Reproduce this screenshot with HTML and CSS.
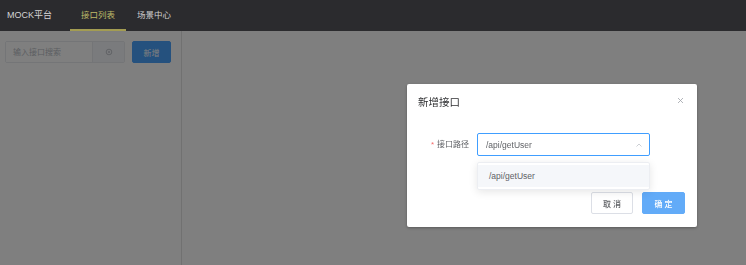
FILE: index.html
```html
<!DOCTYPE html>
<html lang="zh-CN">
<head>
    <meta charset="UTF-8">
    <meta name="viewport" content="width=device-width, initial-scale=1.0">
    <title>MOCK平台</title>
    <link rel="stylesheet" href="styles.css">
</head>
<body>

    <header class="topbar">
        <div class="brand">MOCK平台</div>
        <nav class="nav">
            <a class="nav-item active">接口列表</a>
            <a class="nav-item">场景中心</a>
        </nav>
    </header>

    <div class="layout">
        <aside class="sidebar">
            <div class="search-row">
                <div class="input-group">
                    <input class="search-input" type="text" placeholder="输入接口搜索">
                    <span class="append">
                        <svg width="8" height="8" viewBox="0 0 8 8">
                            <circle cx="4" cy="4" r="2.8" fill="none" stroke="#b4b8bf" stroke-width="0.8"/>
                            <circle cx="4" cy="4" r="1" fill="#c0c4cc"/>
                        </svg>
                    </span>
                </div>
                <button class="btn btn-primary">新增</button>
            </div>
        </aside>
        <main class="content"></main>
    </div>

    <div class="mask"></div>

    <div class="dialog">
        <div class="dialog-header">
            <span class="dialog-title">新增接口</span>
            <button class="dialog-close">
                <svg width="7" height="7" viewBox="0 0 7 7">
                    <path d="M1 1 L6 6 M6 1 L1 6" stroke="#a0a3a9" stroke-width="0.8"/>
                </svg>
            </button>
        </div>
        <div class="dialog-body">
            <div class="form-item">
                <label class="form-label"><span class="required">*</span>接口路径</label>
                <div class="select">
                    <div class="select-input">
                        <span>/api/getUser</span>
                        <svg class="select-arrow" width="8" height="6" viewBox="0 0 8 6">
                            <path d="M1.5 4.5 L4 2 L6.5 4.5" fill="none" stroke="#c6c9cf" stroke-width="0.9"/>
                        </svg>
                    </div>
                    <ul class="dropdown">
                        <li class="dropdown-item hover">/api/getUser</li>
                    </ul>
                </div>
            </div>
        </div>
        <div class="dialog-footer">
            <button class="btn btn-default">取 消</button>
            <button class="btn btn-confirm">确 定</button>
        </div>
    </div>

</body>
</html>
```

FILE: styles.css
```css
body {
    margin: 0;
    font-family: "Liberation Sans", "Noto Sans CJK SC", sans-serif;
    background: #fff;
    color: #606266;
}
.topbar {
    position: relative;
    z-index: 20;
    height: 31px;
    background: #2b2b2e;
    display: flex;
    padding-left: 7px;
}
.brand {
    color: #d4d4d4;
    font-size: 9px;
    line-height: 31px;
    margin-right: 18px;
}
.nav {
    display: flex;
}
.nav-item {
    padding: 2px 11px 0;
    line-height: 27px;
    font-size: 8.5px;
    color: #d0d0d0;
    border-bottom: 2px solid transparent;
}
.nav-item.active {
    color: #bfb968;
    border-bottom-color: #a39c52;
}
.layout {
    display: flex;
    height: calc(100vh - 31px);
}
.sidebar {
    width: 182px;
    border-right: 1px solid #e2e2e2;
    padding: 10px 5px;
    box-sizing: border-box;
    flex: none;
}
.search-row {
    display: flex;
    gap: 7px;
}
.input-group {
    display: flex;
    width: 120px;
    height: 22px;
    border: 1px solid #e8eaee;
    border-radius: 2px;
    box-sizing: border-box;
    overflow: hidden;
}
.search-input {
    flex: 1;
    min-width: 0;
    border: 0;
    outline: none;
    padding: 0 0 0 7px;
    font-family: inherit;
    font-size: 8px;
    color: #606266;
}
.search-input::placeholder {
    color: #b8bcc4;
}
.append {
    width: 31px;
    background: #f5f7fa;
    border-left: 1px solid #e8eaee;
    display: flex;
    align-items: center;
    justify-content: center;
}
.btn {
    height: 22px;
    border-radius: 2px;
    font-family: inherit;
    font-size: 8px;
    padding: 0;
    cursor: pointer;
}
.btn-primary {
    width: 39px;
    background: #4aa2fc;
    border: 1px solid #4aa2fc;
    color: #fff;
}
.content {
    flex: 1;
}
.mask {
    position: fixed;
    inset: 0;
    z-index: 10;
    background: rgba(0, 0, 0, 0.5);
}
.dialog {
    position: absolute;
    left: 407px;
    top: 84px;
    width: 290px;
    z-index: 30;
    background: #fff;
    border-radius: 2px;
    box-shadow: 0 1px 3px rgba(0, 0, 0, 0.3);
}
.dialog-header {
    padding: 11px 11px 0;
}
.dialog-title {
    display: block;
    font-size: 10.5px;
    line-height: 15px;
    color: #303133;
}
.dialog-close {
    position: absolute;
    top: 13px;
    right: 13px;
    border: 0;
    background: none;
    padding: 0;
    width: 7px;
    height: 7px;
    display: flex;
}
.dialog-body {
    padding: 23px 11px 36px;
}
.form-item {
    display: flex;
}
.form-label {
    width: 59px;
    padding-right: 8px;
    box-sizing: border-box;
    text-align: right;
    font-size: 8px;
    line-height: 23px;
    color: #606266;
}
.required {
    color: #f56c6c;
    margin-right: 3px;
}
.select {
    position: relative;
    width: 173px;
}
.select-input {
    height: 23px;
    border: 1px solid #409eff;
    border-radius: 2px;
    box-sizing: border-box;
    padding: 0 6px 0 8px;
    display: flex;
    align-items: center;
    justify-content: space-between;
    font-size: 8.5px;
    color: #606266;
}
.dropdown {
    position: absolute;
    top: 29px;
    left: 0;
    width: 173px;
    box-sizing: border-box;
    margin: 0;
    padding: 2px 0;
    list-style: none;
    background: #fff;
    border: 1px solid #eceef2;
    border-radius: 2px;
    box-shadow: 0 2px 8px rgba(0, 0, 0, 0.1);
}
.dropdown-item {
    height: 22px;
    line-height: 22px;
    padding: 0 11px;
    font-size: 8.5px;
    color: #606266;
}
.dropdown-item.hover {
    background: #f5f7fa;
}
.dialog-footer {
    display: flex;
    justify-content: flex-end;
    gap: 9px;
    padding: 0 12px 13px;
}
.btn-default {
    width: 42px;
    background: #fff;
    border: 1px solid #dcdfe6;
    color: #606266;
    font-weight: 500;
}
.btn-confirm {
    width: 43px;
    background: #62abf8;
    border: 1px solid #62abf8;
    color: #fff;
    font-weight: 500;
}
```
